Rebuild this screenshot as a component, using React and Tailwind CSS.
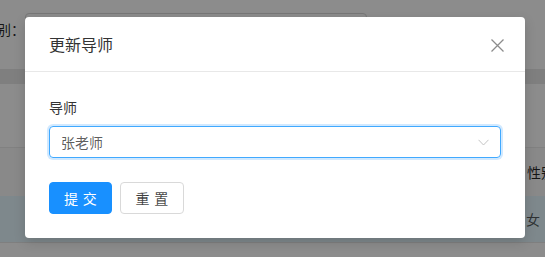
import React from "react";

export default function App() {
  return (
    <div className="relative w-[545px] h-[257px] overflow-hidden bg-white font-['Noto_Sans_CJK_SC',sans-serif] text-[14px] text-[rgba(0,0,0,0.85)]">
      {/* underlying page */}
      <div className="flex flex-col">
        <div className="h-[69px] flex items-start">
          <div className="w-[25px] h-[58px] flex items-center justify-end overflow-hidden whitespace-nowrap">
            <span className="leading-[20px]">性别：</span>
          </div>
          <div className="mt-[13px] w-[342px] h-[32px] border border-[#d9d9d9] rounded bg-white"></div>
        </div>
        <div className="h-[15px] bg-[#e8e8e8]"></div>
        <div className="h-[64px] border-b border-[#ececec]"></div>
        <div className="h-[48px] bg-[#fafafa] flex items-center pl-[527px] whitespace-nowrap">
          <span>性别</span>
        </div>
        <div className="h-[47px] bg-[#e6f7ff] flex items-center pl-[526px] border-b border-[#e8e8e8] whitespace-nowrap">
          <span className="text-[rgba(0,0,0,0.65)]">女</span>
        </div>
        <div className="h-[20px]"></div>
      </div>

      {/* mask */}
      <div className="absolute inset-0 bg-[rgba(0,0,0,0.45)]"></div>

      {/* modal */}
      <div className="absolute left-[25px] top-[17px] w-[500px] bg-white rounded shadow-[0_4px_12px_rgba(0,0,0,0.15)]">
        <div className="relative px-6 py-4 border-b border-[#e8e8e8]">
          <div className="text-[16px] leading-[22px] text-[#333]">更新导师</div>
          <button className="absolute right-0 top-0 w-14 h-14 flex items-center justify-center">
            <svg width="13" height="13" viewBox="0 0 13 13">
              <path d="M0.5 0.5 L12.5 12.5 M12.5 0.5 L0.5 12.5" stroke="#8c8c8c" strokeWidth="1.3" fill="none" />
            </svg>
          </button>
        </div>
        <div className="p-6">
          <div className="leading-[22px] pb-2 text-[#333]">导师</div>
          <div className="h-8 border border-[#40a9ff] rounded shadow-[0_0_0_2px_rgba(24,144,255,0.2)] px-[11px] flex items-center justify-between">
            <span className="text-[rgba(0,0,0,0.65)] leading-[22px]">张老师</span>
            <svg width="11" height="7" viewBox="0 0 11 7">
              <path d="M0.5 0.8 L5.5 6 L10.5 0.8" stroke="#c4c4c4" strokeWidth="1" fill="none" />
            </svg>
          </div>
          <div className="mt-6 flex gap-2">
            <button className="h-8 w-[63px] rounded bg-[#1890ff] border border-[#1890ff] text-white leading-[22px] flex items-center justify-center">
              <span className="tracking-[0.34em] mr-[-0.34em]">提交</span>
            </button>
            <button className="h-8 w-[64px] rounded bg-white border border-[#d9d9d9] text-[rgba(0,0,0,0.75)] leading-[22px] flex items-center justify-center">
              <span className="tracking-[0.34em] mr-[-0.34em]">重置</span>
            </button>
          </div>
        </div>
      </div>
    </div>
  );
}
